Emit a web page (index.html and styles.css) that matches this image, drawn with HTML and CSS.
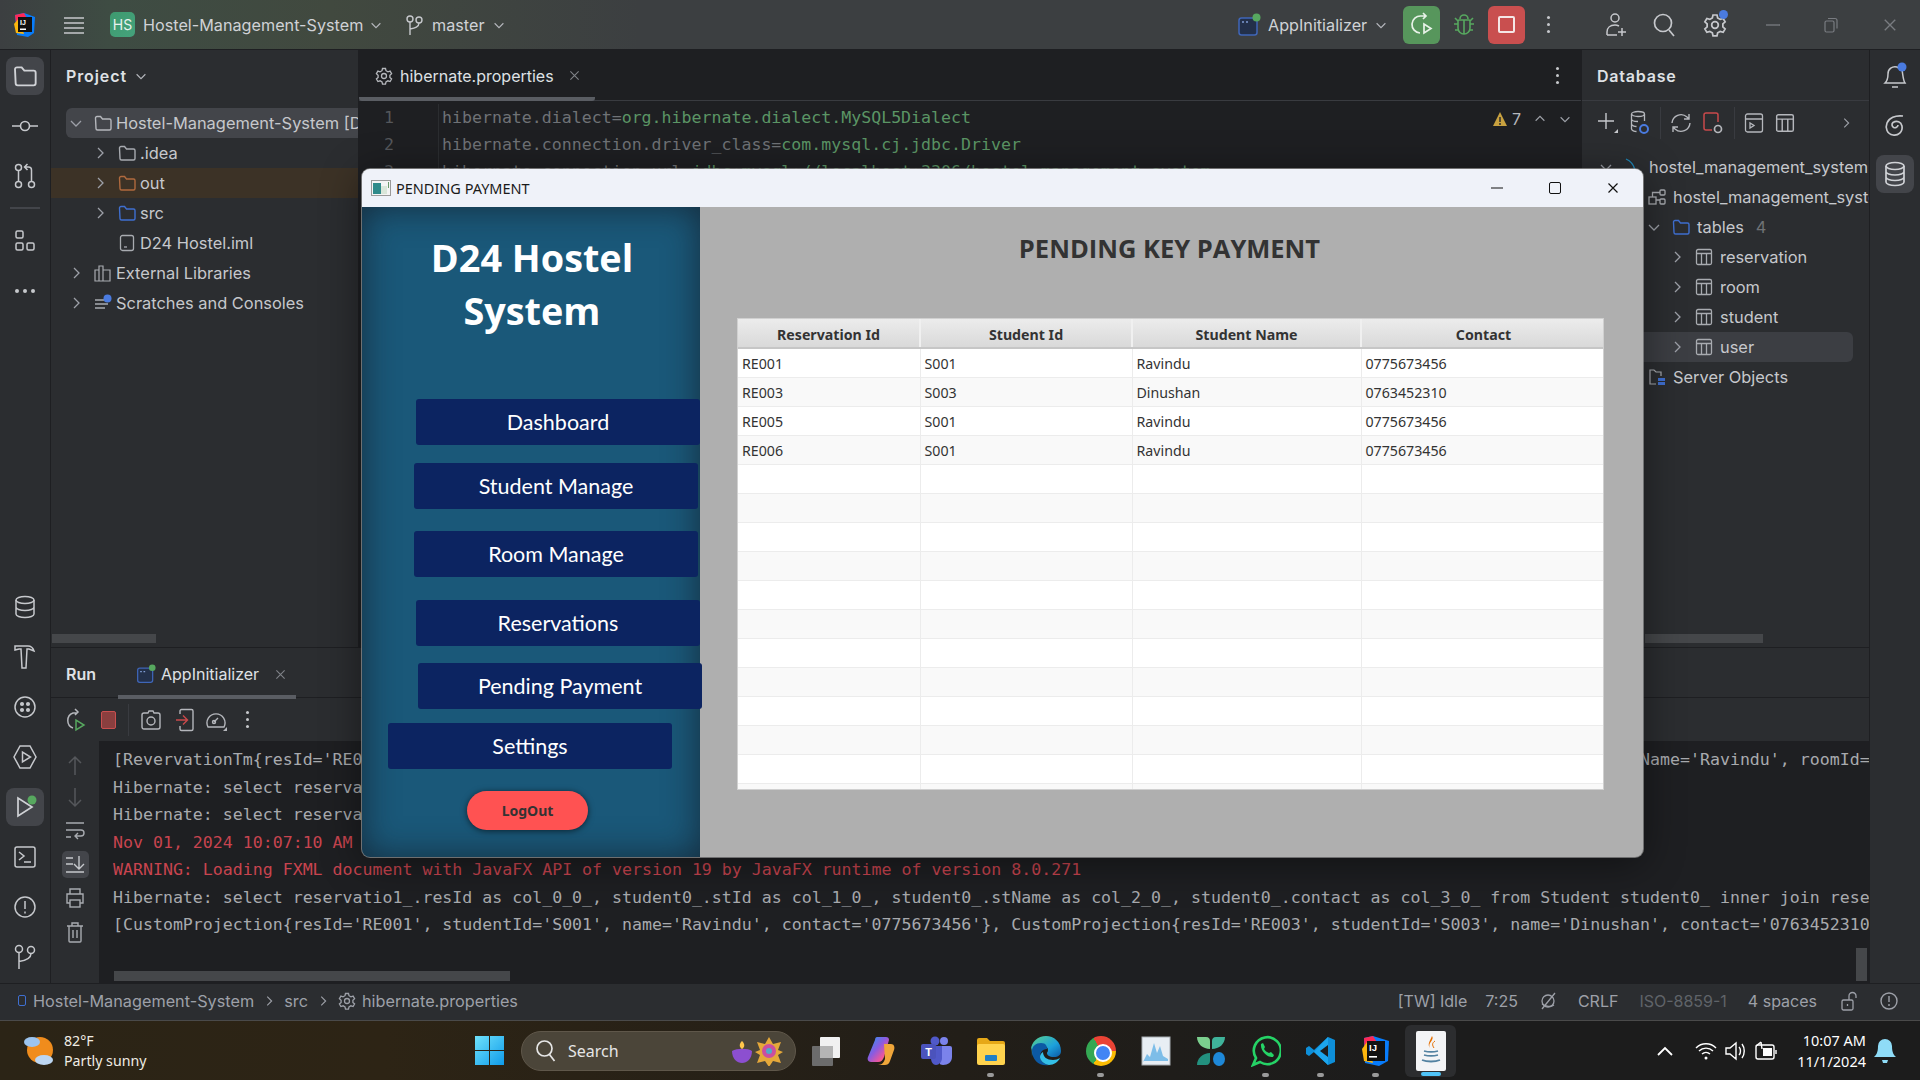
FILE: index.html
```html
<!DOCTYPE html>
<html lang="en">
  <head>
    <meta charset="UTF-8" />
    <meta name="viewport" content="width=device-width, initial-scale=1.0" />
    <title>Hostel-Management-System</title>
    <link rel="stylesheet" href="styles.css">
  </head>
  <body>
    <svg class="defs" width="0" height="0">
      <symbol id="chev-r" viewBox="0 0 16 16"><path d="M6 3l5 5-5 5" fill="none" stroke="currentColor" stroke-width="1.3"/></symbol>
      <symbol id="chev-d" viewBox="0 0 16 16"><path d="M3 6l5 5 5-5" fill="none" stroke="currentColor" stroke-width="1.3"/></symbol>
      <symbol id="folder" viewBox="0 0 18 18"><path d="M1.5 4a1.5 1.5 0 0 1 1.5-1.500h3.500l2 2.500h7a1.500 1.500 0 0 1 1.500 1.500v8a1.500 1.500 0 0 1-1.500 1.500h-12a1.500 1.500 0 0 1-1.500-1.500z" fill="none" stroke="currentColor" stroke-width="1.400"/></symbol>
      <symbol id="gear" viewBox="0 0 18 18"><path d="M7.500 1.500h3l.5 2.200 1.900 1.100 2.200-.7 1.500 2.600-1.700 1.500v2.200l1.700 1.500-1.500 2.600-2.200-.7-1.900 1.100-.5 2.200h-3l-.5-2.200-1.900-1.100-2.200.7-1.500-2.600 1.700-1.500v-2.200l-1.700-1.500 1.500-2.600 2.200.7 1.900-1.100z" fill="none" stroke="currentColor" stroke-width="1.300"/><circle cx="9" cy="9" r="2.500" fill="none" stroke="currentColor" stroke-width="1.300"/></symbol>
      <symbol id="tbl" viewBox="0 0 18 18"><rect x="1.500" y="1.500" width="15" height="15" rx="1.500" fill="none" stroke="currentColor" stroke-width="1.300"/><path d="M1.500 5.500h15M6.500 5.500v11M11.500 5.500v11" fill="none" stroke="currentColor" stroke-width="1.300"/></symbol>
      <symbol id="cross" viewBox="0 0 12 12"><path d="M1.500 1.500l9 9M10.500 1.500l-9 9" fill="none" stroke="currentColor" stroke-width="1.200"/></symbol>
      <symbol id="run-app" viewBox="0 0 24 24"><rect x="2" y="5" width="18" height="17" rx="2.500" fill="#23304a" stroke="#3f66b8" stroke-width="1.500"/><path d="M5 9h2M9 9h2" stroke="#7f9bd4" stroke-width="1.500"/><circle cx="19.500" cy="4.500" r="4" fill="#57a85f"/></symbol>
    </svg>

    <div class="ide">
      <header class="topbar">
        <svg class="logo" width="24" height="26" viewBox="0 0 24 26">
          <path d="M2 3l9-2 11 4-1 16-6 4-11-2z" fill="#087cfa"/>
          <path d="M2 3l9-2 4 7-11 12z" fill="#fe2857"/>
          <path d="M1 12l5-6 5 16-8-1z" fill="#fdb60d"/>
          <rect x="5" y="5" width="14" height="15" fill="#111"/>
          <text x="7" y="13" class="logo-text">IJ</text>
          <rect x="7" y="16.500" width="6" height="1.500" fill="#fff"/>
        </svg>
        <svg class="burger" width="20" height="20" viewBox="0 0 20 20"><path d="M0 3h20M0 8h20M0 13h20M0 18h20" stroke="#c6c8cc" stroke-width="1.600"/></svg>
        <span class="badge">HS</span>
        <span class="top-text project-name">Hostel-Management-System</span>
        <svg class="ic-14 top-chev" width="14" height="14"><use href="#chev-d"/></svg>
        <svg class="branch-ico" width="18" height="22" viewBox="0 0 18 22" fill="none" stroke="#c6c8cc" stroke-width="1.400"><circle cx="5" cy="5" r="3"/><circle cx="14" cy="6" r="3"/><path d="M5 8v13M14 9c0 4-4 5-9 6"/></svg>
        <span class="top-text branch-name">master</span>
        <svg class="ic-14 top-chev" width="14" height="14"><use href="#chev-d"/></svg>

        <div class="top-right">
          <svg class="run-conf" width="24" height="24"><use href="#run-app"/></svg>
          <span class="top-text conf-name">AppInitializer</span>
          <svg class="ic-14 top-chev" width="14" height="14"><use href="#chev-d"/></svg>
          <span class="act-btn act-green">
            <svg width="24" height="26" viewBox="0 0 24 26" fill="none" stroke="#e8f2e8" stroke-width="1.700"><path d="M10 21a8.500 8.500 0 0 1 1-17l5 0M13 1l3 3-3 3"/><path d="M14 12v9l7-4.500z"/></svg>
          </span>
          <svg class="bug" width="22" height="24" viewBox="0 0 22 24" fill="none" stroke="#57a85f" stroke-width="1.600"><path d="M7 6a4 4 0 0 1 8 0M6 7h10a1 1 0 0 1 1 1v7a6 6 0 0 1-12 0V8a1 1 0 0 1 1-1zM11 7v14M1 11h4M17 11h4M2 17h3M17 17h3M2 5l3 3M20 5l-3 3"/></svg>
          <span class="act-btn act-red"><i class="stop-sq"></i></span>
          <span class="v-dots"></span>
          <svg class="top-ico user-ico" width="24" height="26" viewBox="0 0 24 26" fill="none" stroke="#c6c8cc" stroke-width="1.500"><circle cx="10" cy="6" r="4"/><path d="M2 23v-3c0-4 3-7 8-7 2 0 3 .5 4 1M2 23h10M17 16v8M13 20h8"/></svg>
          <svg class="top-ico search-ico" width="24" height="26" viewBox="0 0 24 26" fill="none" stroke="#c6c8cc" stroke-width="1.700"><circle cx="11" cy="11" r="8.500"/><path d="M17 18l5 6"/></svg>
          <span class="settings-ico">
            <svg width="24" height="24"><use href="#gear"/></svg>
            <i class="blue-dot"></i>
          </span>
          <svg class="win-btn win-min" width="14" height="2" viewBox="0 0 14 2"><path d="M0 1h14" stroke="#797c81" stroke-width="1.300"/></svg>
          <svg class="win-btn win-max" width="14" height="16" viewBox="0 0 14 16" fill="none" stroke="#797c81" stroke-width="1.200"><rect x="1" y="4" width="9" height="11" rx="1.500"/><path d="M4 1.500h7a2 2 0 0 1 2 2v8"/></svg>
          <svg class="win-btn win-close" width="14" height="14" color="#797c81"><use href="#cross"/></svg>
        </div>
      </header>

      <div class="middle">
        <aside class="strip strip-left">
          <span class="strip-btn on"><svg width="26" height="24" color="#d0d2d6"><use href="#folder"/></svg></span>
          <span class="strip-btn"><svg width="26" height="16" viewBox="0 0 26 16" fill="none" stroke="#c6c8cc" stroke-width="1.600"><circle cx="13" cy="8" r="4.500"/><path d="M0 8h8.500M17.500 8H26"/></svg></span>
          <span class="strip-btn"><svg width="22" height="26" viewBox="0 0 22 26" fill="none" stroke="#c6c8cc" stroke-width="1.500"><circle cx="4.500" cy="4.500" r="3"/><circle cx="4.500" cy="21.500" r="3"/><circle cx="17.500" cy="21.500" r="3"/><path d="M4.500 7.500v11M17.500 18.500V7c0-2-1-3-3-3h-3M13.500 1l-3 3 3 3"/></svg></span>
          <i class="strip-sep"></i>
          <span class="strip-btn"><svg width="22" height="24" viewBox="0 0 22 24" fill="none" stroke="#c6c8cc" stroke-width="1.500"><rect x="2" y="2" width="7" height="7" rx="1.500"/><rect x="2" y="14" width="7" height="7" rx="1.500"/><rect x="13" y="14" width="7" height="7" rx="1.500"/></svg></span>
          <span class="strip-btn"><svg width="22" height="6" viewBox="0 0 22 6" fill="#c6c8cc"><circle cx="3" cy="3" r="2"/><circle cx="11" cy="3" r="2"/><circle cx="19" cy="3" r="2"/></svg></span>

          <span class="strip-btn push"><svg width="22" height="24" viewBox="0 0 22 24" fill="none" stroke="#c6c8cc" stroke-width="1.500"><ellipse cx="11" cy="5" rx="9" ry="3.500"/><path d="M2 5v14c0 2 4 3.500 9 3.500s9-1.500 9-3.500V5M2 12c0 2 4 3.500 9 3.500s9-1.500 9-3.500"/></svg></span>
          <span class="strip-btn"><svg width="22" height="26" viewBox="0 0 22 26" fill="none" stroke="#c6c8cc" stroke-width="1.500"><path d="M1 2h13c3 0 5 2 6 5l-5-2h-2l-1 19H8L7 5H5L1 6z"/></svg></span>
          <span class="strip-btn"><svg width="24" height="24" viewBox="0 0 24 24" fill="none" stroke="#c6c8cc" stroke-width="1.500"><circle cx="12" cy="12" r="10"/><circle cx="9" cy="9" r="1.300" fill="#c6c8cc"/><circle cx="15" cy="9" r="1.300" fill="#c6c8cc"/><circle cx="9" cy="15" r="1.300" fill="#c6c8cc"/><circle cx="15" cy="15" r="1.300" fill="#c6c8cc"/></svg></span>
          <span class="strip-btn"><svg width="24" height="26" viewBox="0 0 24 26" fill="none" stroke="#c6c8cc" stroke-width="1.500"><path d="M7 2h10l6 11-6 11H7L1 13z"/><path d="M9.500 8v10l8-5z"/></svg></span>
          <span class="strip-btn on"><svg width="26" height="26" viewBox="0 0 26 26" fill="none" stroke="#d0d2d6" stroke-width="1.700"><path d="M6 4v18l14-9z"/><circle cx="20" cy="6" r="4.500" fill="#57a85f" stroke="none"/></svg></span>
          <span class="strip-btn"><svg width="24" height="24" viewBox="0 0 24 24" fill="none" stroke="#c6c8cc" stroke-width="1.500"><rect x="2" y="2" width="20" height="20" rx="2"/><path d="M6 7l5 4-5 4M11 17h7"/></svg></span>
          <span class="strip-btn"><svg width="24" height="24" viewBox="0 0 24 24" fill="none" stroke="#c6c8cc" stroke-width="1.500"><circle cx="12" cy="12" r="10"/><path d="M12 6v8M12 16.500v2"/></svg></span>
          <span class="strip-btn"><svg width="22" height="26" viewBox="0 0 22 26" fill="none" stroke="#c6c8cc" stroke-width="1.500"><circle cx="5" cy="5" r="3.500"/><circle cx="17" cy="6" r="3.500"/><path d="M5 8.500V25M17 9.500c0 5-5 7-12 8"/></svg></span>
        </aside>

        <main class="work">
          <div class="work-top">
            <section class="project">
              <div class="panel-head">
                <span class="panel-title project-title">Project</span>
                <svg class="ic-14 head-chev" width="14" height="14"><use href="#chev-d"/></svg>
              </div>
              <ul class="tree">
                <li class="row lvl0 selected"><svg class="chev" width="16" height="16"><use href="#chev-d"/></svg>
                  <svg class="tree-ico" width="18" height="18" color="#b5b7bc"><use href="#folder"/></svg><span class="name">Hostel-Management-System [D24 Hostel]</span></li>
                <li class="row lvl1"><svg class="chev" width="16" height="16"><use href="#chev-r"/></svg>
                  <svg class="tree-ico" width="18" height="18" color="#a8abb0"><use href="#folder"/></svg><span class="name">.idea</span></li>
                <li class="row lvl1 out"><svg class="chev" width="16" height="16"><use href="#chev-r"/></svg>
                  <svg class="tree-ico" width="18" height="18" color="#b06a3e"><use href="#folder"/></svg><span class="name">out</span></li>
                <li class="row lvl1"><svg class="chev" width="16" height="16"><use href="#chev-r"/></svg>
                  <svg class="tree-ico" width="18" height="18" color="#3f6fd0"><use href="#folder"/></svg><span class="name">src</span></li>
                <li class="row lvl1"><span class="chev-gap"></span>
                  <svg class="tree-ico" width="18" height="18" viewBox="0 0 18 18" fill="none" stroke="#a8abb0" stroke-width="1.300"><rect x="2.500" y="1.500" width="13" height="15" rx="2"/><path d="M6 13h3"/></svg><span class="name">D24 Hostel.iml</span></li>
                <li class="row lvl0"><svg class="chev" width="16" height="16"><use href="#chev-r"/></svg>
                  <svg class="tree-ico" width="18" height="18" viewBox="0 0 18 18" fill="none" stroke="#a8abb0" stroke-width="1.200"><path d="M1 6h4v11H1zM5 2h4v15H5zM9 6h7v11H9z"/></svg><span class="name">External Libraries</span></li>
                <li class="row lvl0"><svg class="chev" width="16" height="16"><use href="#chev-r"/></svg>
                  <svg class="tree-ico" width="18" height="18" viewBox="0 0 18 18" fill="none" stroke="#a8abb0" stroke-width="1.300"><path d="M1 6h9M1 10h13M1 14h10"/><circle cx="13.500" cy="4.500" r="4" fill="#4a7be0" stroke="none"/></svg><span class="name">Scratches and Consoles</span></li>
              </ul>
              <i class="scroll-thumb thumb-project"></i>
            </section>

            <section class="editor">
              <div class="tabs">
                <div class="tab">
                  <svg class="tab-gear" width="18" height="18" color="#b5b7bc"><use href="#gear"/></svg>
                  <span>hibernate.properties</span>
                  <svg class="tab-close" width="11" height="11" color="#7f8287"><use href="#cross"/></svg>
                </div>
                <span class="v-dots tab-dots"></span>
              </div>
              <div class="code">
                <ol class="gutter">
                  <li>1</li>
                  <li>2</li>
                  <li>3</li>
                </ol>
                <pre class="source"><span class="k">hibernate.dialect=</span><span class="v">org.hibernate.dialect.MySQL5Dialect</span>
<span class="k">hibernate.connection.driver_class=</span><span class="v">com.mysql.cj.jdbc.Driver</span>
<span class="k">hibernate.connection.url=</span><span class="v">jdbc:mysql://localhost:3306/hostel_management_system</span></pre>
                <div class="inspect">
                  <svg width="16" height="16" viewBox="0 0 16 16"><path d="M8 1l7 14H1z" fill="#c8a13f"/><path d="M8 6v5M8 12v2" stroke="#2a2b2e" stroke-width="1.500"/></svg>
                  <span class="inspect-num">7</span>
                  <svg class="ic-14" width="14" height="14"><g transform="rotate(180 7 7)"><use href="#chev-d"/></g></svg>
                  <svg class="ic-14" width="14" height="14"><use href="#chev-d"/></svg>
                </div>
              </div>
            </section>

            <section class="database">
              <div class="panel-head">
                <span class="panel-title db-title">Database</span>
              </div>
              <div class="db-tools">
                <svg class="t-add" width="22" height="22" viewBox="0 0 22 22" fill="none" stroke="#c6c8cc" stroke-width="1.400"><path d="M9 1v16M1 9h16"/><path d="M21 17v4h-4z" fill="#c6c8cc" stroke="none"/></svg>
                <svg class="t-db" width="20" height="26" viewBox="0 0 20 26" fill="none" stroke="#b5b7bc" stroke-width="1.300"><ellipse cx="8" cy="4" rx="6.500" ry="2.500"/><path d="M1.500 4v15c0 1.500 3 2.500 5 2.500M14.500 4v7M1.500 9c0 1.500 3 2.500 6.500 2.500M1.500 14c0 1.500 3 2.500 5 2.500"/><circle cx="14" cy="19" r="4" stroke="#4a7be0" stroke-width="2"/></svg>
                <i class="t-sep"></i>
                <svg class="t-sync" width="22" height="22" viewBox="0 0 22 22" fill="none" stroke="#b5b7bc" stroke-width="1.400"><path d="M2 11a9 9 0 0 1 15-6l2 2M19 2v5h-5M20 11a9 9 0 0 1-15 6l-2-2M3 20v-5h5"/></svg>
                <svg class="t-stop" width="22" height="24" viewBox="0 0 22 24" fill="none"><path d="M10 19H4a2 2 0 0 1-2-2V4a2 2 0 0 1 2-2h10a2 2 0 0 1 2 2v7" stroke="#c9494b" stroke-width="1.500"/><circle cx="16" cy="18" r="3.500" stroke="#b5b7bc" stroke-width="1.700"/></svg>
                <i class="t-sep"></i>
                <svg class="t-con" width="20" height="22" viewBox="0 0 20 22" fill="none" stroke="#b5b7bc" stroke-width="1.300"><rect x="1.500" y="2" width="17" height="18" rx="2"/><path d="M1.500 7h17M6 11v5l4-2.500z"/></svg>
                <svg class="t-tbl" width="20" height="22" color="#b5b7bc"><use href="#tbl"/></svg>
                <svg class="t-more" width="14" height="14" color="#9da0a8"><use href="#chev-r"/></svg>
              </div>
              <ul class="tree db-tree">
                <li class="row d0"><svg class="chev" width="16" height="16"><use href="#chev-d"/></svg>
                  <svg class="tree-ico" width="18" height="18" viewBox="0 0 18 18" fill="none" stroke="#1f87b8" stroke-width="1.300"><path d="M2 1c5 2 8 7 9 11l4 4M11 12l-1 4"/></svg><span class="name">hostel_management_system</span></li>
                <li class="row d1"><span class="chev-gap"></span>
                  <svg class="tree-ico" width="18" height="18" viewBox="0 0 18 18" fill="none" stroke="#a8abb0" stroke-width="1.300"><rect x="1" y="9" width="7" height="7"/><rect x="12" y="2" width="5" height="5" rx="1"/><rect x="12" y="11" width="5" height="5" rx="1"/><path d="M8 12h4M4.500 9V4.500H12"/></svg><span class="name">hostel_management_system</span></li>
                <li class="row d2"><svg class="chev" width="16" height="16"><use href="#chev-d"/></svg>
                  <svg class="tree-ico" width="18" height="18" color="#3f6fd0"><use href="#folder"/></svg><span class="name">tables</span><span class="count">4</span></li>
                <li class="row d3"><svg class="chev" width="16" height="16"><use href="#chev-r"/></svg>
                  <svg class="tree-ico" width="18" height="18" color="#a8abb0"><use href="#tbl"/></svg><span class="name">reservation</span></li>
                <li class="row d3"><svg class="chev" width="16" height="16"><use href="#chev-r"/></svg>
                  <svg class="tree-ico" width="18" height="18" color="#a8abb0"><use href="#tbl"/></svg><span class="name">room</span></li>
                <li class="row d3"><svg class="chev" width="16" height="16"><use href="#chev-r"/></svg>
                  <svg class="tree-ico" width="18" height="18" color="#a8abb0"><use href="#tbl"/></svg><span class="name">student</span></li>
                <li class="row d3 picked"><svg class="chev" width="16" height="16"><use href="#chev-r"/></svg>
                  <svg class="tree-ico" width="18" height="18" color="#a8abb0"><use href="#tbl"/></svg><span class="name">user</span></li>
                <li class="row d1"><span class="chev-gap"></span>
                  <svg class="tree-ico" width="18" height="18" viewBox="0 0 18 18" fill="none" stroke="#a8abb0" stroke-width="1.200"><path d="M8 16H2V2h4l2 2h5v4"/><rect x="10" y="10" width="7" height="3" fill="#3f6fd0" stroke="none"/><rect x="10" y="14" width="7" height="3" fill="#3f6fd0" stroke="none"/></svg><span class="name">Server Objects</span></li>
              </ul>
              <i class="scroll-thumb thumb-db"></i>
            </section>
          </div>

          <section class="run">
            <div class="run-head">
              <span class="panel-title run-title">Run</span>
              <div class="run-tab">
                <svg width="20" height="20"><use href="#run-app"/></svg>
                <span>AppInitializer</span>
                <svg class="tab-close" width="11" height="11" color="#7f8287"><use href="#cross"/></svg>
              </div>
            </div>
            <div class="run-tools">
              <svg class="rt-rerun" width="22" height="24" viewBox="0 0 22 24" fill="none" stroke="#b5b7bc" stroke-width="1.500"><path d="M9 20a8 8 0 0 1 0-15l4 0M11 1l3 3-3 3"/><path d="M12 12v10l8-5z" stroke="#57a85f"/></svg>
              <i class="rt-stop"></i>
              <i class="t-sep rt-sep"></i>
              <svg class="rt-cam" width="20" height="22" viewBox="0 0 20 22" fill="none" stroke="#b5b7bc" stroke-width="1.400"><path d="M7 4l1-2h4l1 2h4a2 2 0 0 1 2 2v12a2 2 0 0 1-2 2H3a2 2 0 0 1-2-2V6a2 2 0 0 1 2-2z"/><circle cx="10" cy="12" r="4"/></svg>
              <svg class="rt-exit" width="18" height="24" viewBox="0 0 18 24" fill="none" stroke="#b5b7bc" stroke-width="1.400"><path d="M4 6V3a1.500 1.500 0 0 1 1.500-1.500h10A1.500 1.500 0 0 1 17 3v18a1.500 1.500 0 0 1-1.500 1.500h-10A1.500 1.500 0 0 1 4 21v-3"/><path d="M0 12h11M7 7.500l4.500 4.500L7 16.500" stroke="#c9494b"/></svg>
              <svg class="rt-gauge" width="22" height="22" viewBox="0 0 22 22" fill="none" stroke="#b5b7bc" stroke-width="1.400"><path d="M3 18a9 9 0 1 1 16 0zM9 13l4-4"/><circle cx="9" cy="13" r="1.500"/><path d="M22 18v4h-4z" fill="#b5b7bc" stroke="none"/></svg>
              <span class="v-dots rt-dots"></span>
            </div>
            <div class="run-body">
              <div class="run-side">
                <svg class="rs" width="14" height="20" viewBox="0 0 14 20" fill="none" stroke="#55575b" stroke-width="1.500"><path d="M7 20V2M1 8l6-6 6 6"/></svg>
                <svg class="rs" width="14" height="20" viewBox="0 0 14 20" fill="none" stroke="#55575b" stroke-width="1.500"><path d="M7 0v18M1 12l6 6 6-6"/></svg>
                <svg class="rs" width="20" height="20" viewBox="0 0 20 20" fill="none" stroke="#a8abb0" stroke-width="1.400"><path d="M1 2h18M1 9h15a3 3 0 0 1 0 6h-6M13 12l-3 3 3 3M1 16h5"/></svg>
                <span class="rs-on"><svg width="20" height="20" viewBox="0 0 20 20" fill="none" stroke="#c6c8cc" stroke-width="1.400"><path d="M1 3h7M1 9h7M1 17h18M14 1v13M9 9l5 5 5-5"/></svg></span>
                <svg class="rs" width="20" height="20" viewBox="0 0 20 20" fill="none" stroke="#a8abb0" stroke-width="1.400"><path d="M5 6V1h10v5M5 15H2V6h16v9h-3"/><rect x="5" y="12" width="10" height="7"/></svg>
                <svg class="rs" width="18" height="22" viewBox="0 0 18 22" fill="none" stroke="#a8abb0" stroke-width="1.400"><path d="M1 5h16M6 5V2h6v3M3 5v15a1 1 0 0 0 1 1h10a1 1 0 0 0 1-1V5M7 9v8M11 9v8"/></svg>
              </div>
              <pre class="console"><span class="log">[RevervationTm{resId='RE001', date=2024-10-28, studentId='S001', roomTypeId='RM-1324', status='Pending', keyMoney=5000.0, paidAmount=0.0, qty=01, studentName='Ravindu', roomId='RM-1324'}]</span>
<span class="log">Hibernate: select reservatio0_.resId as resId1_1_, reservatio0_.date as date2_1_ from Reservation reservatio0_</span>
<span class="log">Hibernate: select reservatio0_.resId as resId1_1_, reservatio0_.date as date2_1_ from Reservation reservatio0_</span>
<span class="err">Nov 01, 2024 10:07:10 AM javafx.fxml.FXMLLoader$ValueElement processValue</span>
<span class="err">WARNING: Loading FXML document with JavaFX API of version 19 by JavaFX runtime of version 8.0.271</span>
<span class="log">Hibernate: select reservatio1_.resId as col_0_0_, student0_.stId as col_1_0_, student0_.stName as col_2_0_, student0_.contact as col_3_0_ from Student student0_ inner join reservation</span>
<span class="log">[CustomProjection{resId='RE001', studentId='S001', name='Ravindu', contact='0775673456'}, CustomProjection{resId='RE003', studentId='S003', name='Dinushan', contact='0763452310'}]</span></pre>
              <i class="console-h"></i>
              <i class="console-v"></i>
            </div>
          </section>
        </main>

        <aside class="strip strip-right">
          <span class="strip-btn bell-btn">
            <svg width="24" height="28" viewBox="0 0 24 28" fill="none" stroke="#c6c8cc" stroke-width="1.500"><path d="M2 21c2-2 3-4 3-9a7 7 0 0 1 9-7l5 3c1 5 1 10 3 13zM9 25h6"/><circle cx="19" cy="5" r="4.500" fill="#4a7be0" stroke="none"/></svg>
          </span>
          <span class="strip-btn"><svg width="24" height="26" viewBox="0 0 24 26" fill="none" stroke="#c6c8cc" stroke-width="1.700"><path d="M15 13a3 3 0 1 1-5-2.500c4-2.500 8-.5 9 3.500 1 6-4 10-9 9-6-1-8-7-6-12 2-5 8-8 16-7"/></svg></span>
          <span class="strip-btn on"><svg width="22" height="26" viewBox="0 0 22 26" fill="none" stroke="#d0d2d6" stroke-width="1.700"><ellipse cx="11" cy="5" rx="9" ry="3.500"/><path d="M2 5v16c0 2 4 3.500 9 3.500s9-1.500 9-3.500V5M2 10.500c0 2 4 3.500 9 3.500s9-1.500 9-3.500M2 16c0 2 4 3.500 9 3.500s9-1.500 9-3.500"/></svg></span>
        </aside>
      </div>

      <footer class="status">
        <i class="st-mod"></i>
        <span>Hostel-Management-System</span>
        <svg class="st-chev" width="14" height="14"><use href="#chev-r"/></svg>
        <span>src</span>
        <svg class="st-chev" width="14" height="14"><use href="#chev-r"/></svg>
        <svg class="st-gear" width="18" height="18"><use href="#gear"/></svg>
        <span>hibernate.properties</span>
        <div class="st-right">
          <span class="st-idle">[TW] Idle</span>
          <span>7:25</span>
          <svg width="18" height="20" viewBox="0 0 18 20" fill="none" stroke="#9da0a8" stroke-width="1.300"><circle cx="9" cy="10" r="6"/><path d="M3 13c4 3 9 3 12 1M3 18L16 2"/></svg>
          <span>CRLF</span>
          <span class="dim">ISO-8859-1</span>
          <span>4 spaces</span>
          <svg class="st-lock" width="18" height="20" viewBox="0 0 18 20" fill="none" stroke="#9da0a8" stroke-width="1.300"><rect x="1" y="9" width="11" height="10" rx="1.500"/><path d="M8 9V5a3.500 3.500 0 0 1 7 0v2M6.500 13v2"/></svg>
          <svg class="st-warn" width="18" height="18" viewBox="0 0 18 18" fill="none" stroke="#9da0a8" stroke-width="1.400"><circle cx="9" cy="9" r="8"/><path d="M9 4v6M9 12v2"/></svg>
        </div>
      </footer>

      <footer class="taskbar">
        <div class="weather">
          <svg width="34" height="32" viewBox="0 0 34 32">
            <circle cx="17" cy="15" r="13" fill="#f08c1c"/>
            <ellipse cx="9" cy="7" rx="8" ry="5" fill="#9cc4ee"/>
            <ellipse cx="21" cy="25" rx="9" ry="5" fill="#bcd6f2"/>
          </svg>
          <div class="weather-text">
            <span>82°F</span>
            <span>Partly sunny</span>
          </div>
        </div>
        <svg class="start" width="29" height="29" viewBox="0 0 29 29">
          <defs><linearGradient id="win" x1="0" y1="0" x2="1" y2="1"><stop offset="0" stop-color="#6fe2fb"/><stop offset="1" stop-color="#0f9bea"/></linearGradient></defs>
          <path d="M0 0h14v14H0zM15 0h14v14H15zM0 15h14v14H0zM15 15h14v14H15z" fill="url(#win)"/>
        </svg>
        <div class="search">
          <svg width="22" height="24" viewBox="0 0 22 24" fill="none" stroke="#e6e6e6" stroke-width="1.700"><circle cx="9.500" cy="9.500" r="7.500"/><path d="M14.500 15.500l5 6.500"/></svg>
          <span>Search</span>
          <svg class="search-deco" width="54" height="30" viewBox="0 0 54 30">
            <path d="M2 15c5-3 16-3 20 0 0 8-5 12-10 12S2 23 2 15z" fill="#8c4fd0"/>
            <path d="M12 5c3 3 3 6 0 8-3-2-3-5 0-8z" fill="#ffc64a"/>
            <path d="M39 1l4 7 8-2-3 8 5 2-5 3 3 8-8-2-4 6-4-6-8 2 3-8-5-3 5-2-3-8 8 2z" fill="#e5a83a"/>
            <circle cx="39" cy="15" r="7" fill="#c94fa0"/>
            <circle cx="39" cy="15" r="3" fill="#4fa8c9"/>
          </svg>
        </div>
        <div class="apps">
          <span class="app">
            <svg width="30" height="30" viewBox="0 0 30 30"><rect x="1" y="10" width="21" height="20" rx="1" fill="#6c6c6c"/><rect x="9" y="1" width="20" height="21" rx="1" fill="#f1f1f1"/><rect x="9" y="10" width="13" height="12" fill="#b4b4b4"/></svg>
          </span>
          <span class="app">
            <svg width="30" height="32" viewBox="0 0 30 32">
              <defs><linearGradient id="cop" x1="0" y1="0" x2="1" y2="1"><stop offset="0" stop-color="#1f9cf0"/><stop offset=".45" stop-color="#8a5be0"/><stop offset=".75" stop-color="#f0569a"/><stop offset="1" stop-color="#f8a42a"/></linearGradient></defs>
              <path d="M11 2h9c2 0 3 1 3 3l-5 17c-1 3-3 5-6 5H5c-3 0-4-3-3-5l7-17c0-2 1-3 2-3z" fill="url(#cop)"/>
              <path d="M18 9h7c3 0 4 3 3 6l-4 11c-1 3-3 4-5 4H12c4 0 6-3 7-6z" fill="#f0a63a"/>
            </svg>
          </span>
          <span class="app">
            <svg width="32" height="30" viewBox="0 0 32 30">
              <circle cx="24" cy="5" r="4" fill="#7b83eb"/><circle cx="15" cy="5" r="4.500" fill="#5059c9"/>
              <path d="M20 10h10a2 2 0 0 1 2 2v9c0 5-4 8-9 8-2 0-3-1-3-1z" fill="#7b83eb"/>
              <path d="M11 10h11v12c0 4-3 7-6 7-3 0-5-3-5-7z" fill="#5059c9"/>
              <rect x="1" y="8" width="15" height="15" rx="2" fill="#4b53bc"/>
              <text x="8.500" y="20" class="teams-t">T</text>
            </svg>
          </span>
          <span class="app dot">
            <svg width="30" height="30" viewBox="0 0 30 30"><path d="M1 4a2 2 0 0 1 2-2h8l3 3h13a2 2 0 0 1 2 2v3H1z" fill="#e6a817"/><rect x="1" y="8" width="28" height="21" rx="2" fill="#ffd34e"/><rect x="9" y="19" width="12" height="6" rx="1" fill="#1f7fc7"/></svg>
          </span>
          <span class="app">
            <svg width="30" height="30" viewBox="0 0 30 30">
              <defs><linearGradient id="edge" x1="0" y1="0" x2="1" y2="1"><stop offset="0" stop-color="#5ad18c"/><stop offset=".6" stop-color="#1ca0dc"/><stop offset="1" stop-color="#0c59a4"/></linearGradient></defs>
              <path d="M15 0c8 0 15 6 15 15 0 4-3 6-7 6-5 0-7-2-7-4 0-1 1-1 1-3 0-3-3-5-7-4-5 1-9 6-9 11C1 13 0 10 0 14 0 6 7 0 15 0z" fill="url(#edge)"/>
              <path d="M1 15c0-5 4-8 9-8s6 3 6 6c-5 0-7 4-7 8 0 3 3 7 9 8-9 2-17-5-17-14z" fill="#0c59a4"/>
              <path d="M18 29c-6-1-9-5-9-8 0-2 1-4 3-5 0 5 4 8 10 8 3 0 5-1 7-2-2 4-6 7-11 7z" fill="#34c0e8"/>
            </svg>
          </span>
          <span class="app dot"><i class="chrome"></i></span>
          <span class="app">
            <svg width="30" height="30" viewBox="0 0 30 30"><rect x="1" y="1" width="28" height="28" fill="#e8eef4" stroke="#a8adb2"/><path d="M2 26l4-8 3 3 4-14 3 10 3-7 3 10 5 3v2H2z" fill="#7dbde8"/></svg>
          </span>
          <span class="app">
            <svg width="30" height="30" viewBox="0 0 30 30"><path d="M1 1h9c3 0 4 2 4 4v8c-7 0-13-5-13-12z" fill="#7bcf8e"/><path d="M29 1h-9c-3 0-4 2-4 4v8c7 0 13-5 13-12z" fill="#3fb39a"/><path d="M1 29h9c3 0 4-2 4-4v-8C7 17 1 22 1 29z" fill="#23917f"/><ellipse cx="23" cy="23" rx="6" ry="7" fill="#1e88d8"/></svg>
          </span>
          <span class="app dot">
            <svg width="30" height="32" viewBox="0 0 30 32" fill="none"><path d="M2 30l3-7A13.500 13.500 0 1 1 9 27z" stroke="#25d366" stroke-width="2.600"/><path d="M10 9l2-1 2 4-1 2c1 2 3 3 5 4l2-1 3 3-1 2c-5 1-13-6-12-13z" fill="#25d366"/></svg>
          </span>
          <span class="app dot">
            <svg width="30" height="30" viewBox="0 0 30 30"><path d="M22 1l7 3v22l-7 3L8 16 3 20l-3-2v-6l3-2 5 4z" fill="#0e8fd9"/><path d="M22 1v28L8 16z" fill="#1ca6ee"/><path d="M22 9l-8 6 8 6z" fill="#1c1c1c"/></svg>
          </span>
          <span class="app dot">
            <svg width="30" height="32" viewBox="0 0 30 32"><path d="M3 3l9-2 16 5-1 20-9 5-14-3z" fill="#087cfa"/><path d="M3 3l9-2 5 8L4 24z" fill="#fe2857"/><path d="M1 14l5-7 6 21-9-2z" fill="#fdb60d"/><rect x="6" y="6" width="18" height="20" fill="#111"/><text x="8" y="16" class="ij-t">IJ</text><rect x="8" y="21" width="8" height="1.600" fill="#fff"/></svg>
          </span>
          <span class="app current">
            <svg width="30" height="40" viewBox="0 0 30 40"><rect x="0" y="0" width="30" height="40" rx="2" fill="#f3f4f6"/><path d="M16 5c3 4-5 7-2 12-3-4 0-7 2-12z" fill="#e76f00"/><path d="M19 10c-3 2-3 4-1 7" stroke="#e76f00" fill="none"/><path d="M8 20c4 1 10 1 14 0M8 24c4 1 10 1 14 0M6 29c5 2 13 2 18 0" stroke="#5382a1" stroke-width="1.800" fill="none"/></svg>
          </span>
        </div>
        <div class="tray">
          <svg class="tray-chev" width="18" height="12" viewBox="0 0 18 12" fill="none" stroke="#fff" stroke-width="1.800"><path d="M2 10l7-7 7 7"/></svg>
          <svg width="24" height="22" viewBox="0 0 24 22" fill="none" stroke="#fff" stroke-width="1.400"><path d="M2 8a14 14 0 0 1 20 0M5 11a10 10 0 0 1 14 0M8 14a6 6 0 0 1 8 0"/><circle cx="12" cy="18" r="1.500" fill="#fff" stroke="none"/></svg>
          <svg width="24" height="22" viewBox="0 0 24 22" fill="none" stroke="#fff" stroke-width="1.400"><path d="M2 8h4l6-5v16l-6-5H2zM15 7c2 2 2 6 0 8M18 4c3 4 3 10 0 14"/></svg>
          <svg width="24" height="22" viewBox="0 0 24 22" fill="none" stroke="#fff" stroke-width="1.400"><rect x="2" y="5" width="18" height="14" rx="2"/><path d="M22 10v4M2 6l5-4M7 2l1 7" /><rect x="9" y="8" width="9" height="8" fill="#fff" stroke="none"/></svg>
          <div class="clock">
            <span>10:07 AM</span>
            <span>11/1/2024</span>
          </div>
          <svg class="tray-bell" width="24" height="28" viewBox="0 0 24 28"><path d="M12 2a7 7 0 0 1 7 7c0 7 2 9 4 11H1c2-2 4-4 4-11a7 7 0 0 1 7-7z" fill="#8fdcf7"/><path d="M9 23h6l-1 3h-4z" fill="#8fdcf7"/></svg>
        </div>
      </footer>

      <div class="dialog">
        <div class="dialog-title">
          <svg width="20" height="16" viewBox="0 0 20 16"><rect x=".5" y=".5" width="19" height="15" fill="#f4f4f4" stroke="#9a9a9a"/><rect x="2" y="3" width="8" height="11" fill="#2f8a8a"/><rect x="10" y="6" width="6" height="8" fill="#d9e6d9"/><rect x="17" y="2" width="1" height="6" fill="#6a9a6a"/></svg>
          <span>PENDING PAYMENT</span>
          <div class="dialog-ctrls">
            <svg width="12" height="12" viewBox="0 0 12 12"><path d="M0 6h12" stroke="#111" stroke-width="1.200"/></svg>
            <svg width="12" height="12" viewBox="0 0 12 12"><rect x=".5" y=".5" width="11" height="11" rx="1.500" fill="none" stroke="#111"/></svg>
            <svg width="12" height="12" color="#111"><use href="#cross"/></svg>
          </div>
        </div>
        <div class="dialog-body">
          <nav class="sidebar">
            <h1 class="brand">D24 Hostel<br>System</h1>
            <button class="nav-btn nb-dash">Dashboard</button>
            <button class="nav-btn nb-student">Student Manage</button>
            <button class="nav-btn nb-room">Room Manage</button>
            <button class="nav-btn nb-res">Reservations</button>
            <button class="nav-btn nb-pend">Pending Payment</button>
            <button class="nav-btn nb-set">Settings</button>
            <button class="logout">LogOut</button>
          </nav>
          <div class="pending">
            <h2>PENDING KEY PAYMENT</h2>
            <div class="table-wrap">
              <table>
                <colgroup><col class="c1"><col class="c2"><col class="c3"><col class="c4"></colgroup>
                <thead>
                  <tr><th>Reservation Id</th><th>Student Id</th><th>Student Name</th><th>Contact</th></tr>
                </thead>
                <tbody>
                  <tr><td>RE001</td><td>S001</td><td>Ravindu</td><td>0775673456</td></tr>
                  <tr><td>RE003</td><td>S003</td><td>Dinushan</td><td>0763452310</td></tr>
                  <tr><td>RE005</td><td>S001</td><td>Ravindu</td><td>0775673456</td></tr>
                  <tr><td>RE006</td><td>S001</td><td>Ravindu</td><td>0775673456</td></tr>
                  <tr><td></td><td></td><td></td><td></td></tr>
                  <tr><td></td><td></td><td></td><td></td></tr>
                  <tr><td></td><td></td><td></td><td></td></tr>
                  <tr><td></td><td></td><td></td><td></td></tr>
                  <tr><td></td><td></td><td></td><td></td></tr>
                  <tr><td></td><td></td><td></td><td></td></tr>
                  <tr><td></td><td></td><td></td><td></td></tr>
                  <tr><td></td><td></td><td></td><td></td></tr>
                  <tr><td></td><td></td><td></td><td></td></tr>
                  <tr><td></td><td></td><td></td><td></td></tr>
                  <tr><td></td><td></td><td></td><td></td></tr>
                  <tr><td></td><td></td><td></td><td></td></tr>
                </tbody>
              </table>
            </div>
          </div>
        </div>
      </div>
    </div>
  </body>
</html>
```

FILE: styles.css
```css
* {
  margin: 0;
  padding: 0;
  box-sizing: border-box;
  list-style: none;
}
html, body {
  width: 1920px;
  height: 1080px;
  overflow: hidden;
}
body {
  font-family: Inter, "Noto Sans", sans-serif;
  font-size: 16px;
  color: #c6c8cc;
  background: #1e1f22;
}
svg {
  display: block;
  flex: none;
}
i {
  display: block;
}
.defs {
  position: absolute;
}
.ide {
  position: relative;
  width: 1920px;
  height: 1080px;
  display: flex;
  flex-direction: column;
}

/* top bar */
.topbar {
  height: 50px;
  flex: none;
  display: flex;
  align-items: center;
  padding-left: 13px;
  background: linear-gradient(90deg, #3c3f41 0, #3e4c43 110px, #41493f 330px, #3c3f41 640px);
  border-bottom: 1px solid #1e1f22;
}
.logo-text {
  font: bold 7px "Liberation Sans", sans-serif;
  fill: #fff;
}
.burger {
  margin-left: 27px;
}
.badge {
  width: 25px;
  height: 25px;
  margin-left: 26px;
  border-radius: 5px;
  background: linear-gradient(135deg, #3e9a6f, #45a27c);
  color: #e8f2ee;
  font-size: 14px;
  line-height: 25px;
  text-align: center;
}
.top-text {
  white-space: nowrap;
  color: #d0d2d6;
  font-size: 16.200px;
}
.project-name {
  margin-left: 8px;
  width: 219px;
}
.top-chev {
  margin-left: 7px;
  color: #b5b7bc;
}
.branch-ico {
  margin-left: 22px;
}
.branch-name {
  margin-left: 9px;
  width: 53px;
}
.top-right {
  margin-left: auto;
  display: flex;
  align-items: center;
  padding-right: 23px;
}
.conf-name {
  margin-left: 7px;
  width: 99px;
}
.act-btn {
  width: 37px;
  height: 38px;
  border-radius: 6px;
  display: flex;
  align-items: center;
  justify-content: center;
}
.act-green {
  margin-left: 15px;
  background: #57965c;
}
.act-red {
  margin-left: 13px;
  background: #c94f4f;
}
.bug {
  margin-left: 13px;
}
.stop-sq {
  width: 17px;
  height: 17px;
  border: 2px solid #f5e6e6;
  border-radius: 2px;
}
.v-dots {
  width: 3px;
  height: 3px;
  margin: 0 9px 0 22px;
  border-radius: 50%;
  background: #c6c8cc;
  box-shadow: 0 -7px 0 #c6c8cc, 0 7px 0 #c6c8cc;
}
.user-ico {
  margin-left: 46px;
}
.search-ico {
  margin-left: 23px;
}
.settings-ico {
  position: relative;
  margin-left: 27px;
  color: #c6c8cc;
}
.blue-dot {
  position: absolute;
  top: -3px;
  right: -1px;
  width: 9px;
  height: 9px;
  border-radius: 50%;
  background: #4a7be0;
}
.win-min {
  margin-left: 39px;
}
.win-max {
  margin-left: 44px;
}
.win-close {
  margin-left: 45px;
}

/* middle */
.middle {
  flex: none;
  height: 933px;
  display: flex;
}
.strip {
  width: 51px;
  flex: none;
  display: flex;
  flex-direction: column;
  align-items: center;
  padding: 7px 0;
  background: #2b2d30;
}
.strip-left {
  border-right: 1px solid #1e1f22;
}
.strip-right {
  border-left: 1px solid #1e1f22;
}
.strip-btn {
  width: 38px;
  height: 38px;
  margin-bottom: 12px;
  border-radius: 8px;
  display: flex;
  align-items: center;
  justify-content: center;
}
.strip-btn:last-child {
  margin-bottom: 0;
}
.strip-right .strip-btn {
  margin-bottom: 11px;
}
.strip-btn.on {
  background: #43454a;
}
.strip-btn.push {
  margin-top: auto;
}
.strip-sep {
  width: 30px;
  height: 2px;
  margin-bottom: 13px;
  background: #43454a;
}
.work {
  flex: 1;
  min-width: 0;
  display: flex;
  flex-direction: column;
}
.work-top {
  flex: none;
  height: 598px;
  display: flex;
  border-bottom: 1px solid #1e1f22;
}

/* project + database panels */
.project {
  position: relative;
  width: 308px;
  flex: none;
  overflow: hidden;
  background: #2b2d30;
  border-right: 1px solid #1e1f22;
}
.panel-head {
  height: 51px;
  display: flex;
  align-items: center;
  padding: 2px 0 0 15px;
  border-bottom: 1px solid transparent;
}
.panel-title {
  color: #dfe1e5;
  font-size: 16px;
  font-weight: 600;
}
.project-title {
  letter-spacing: .9px;
}
.head-chev {
  margin-left: 7px;
  color: #b5b7bc;
}
.tree {
  padding-top: 7px;
  white-space: nowrap;
}
.row {
  height: 30px;
  display: flex;
  align-items: center;
  color: #c6c8cc;
  font-size: 16.400px;
}
.chev,
.chev-gap {
  width: 16px;
  flex: none;
  color: #9da0a8;
}
.tree-ico {
  margin: 0 4px 0 10px;
}
.name {
  white-space: nowrap;
}
.lvl0 {
  padding-left: 17px;
}
.lvl1 {
  padding-left: 41px;
}
.row.selected {
  margin-left: 15px;
  padding-left: 2px;
  border-radius: 6px 0 0 6px;
  background: #43454a;
}
.row.out {
  background: #3c3226;
}
.scroll-thumb {
  position: absolute;
  height: 9px;
  background: #45474a;
}
.thumb-project {
  left: 1px;
  top: 584px;
  width: 104px;
}
.thumb-db {
  left: 63px;
  top: 584px;
  width: 118px;
}

/* editor */
.editor {
  flex: 1;
  min-width: 0;
  background: #1e1f22;
  overflow: hidden;
}
.tabs {
  height: 51px;
  display: flex;
  align-items: center;
  justify-content: space-between;
  border-bottom: 1px solid #393b40;
}
.tab {
  width: 236px;
  height: 51px;
  display: flex;
  align-items: center;
  padding: 5px 0 0 16px;
  color: #dfe1e5;
  border-bottom: 4px solid #5a5d63;
  border-radius: 0 0 3px 3px;
}
.tab-gear {
  margin-right: 7px;
}
.tab-close {
  margin-left: 15px;
}
.tab-dots {
  margin: 0 22px 0 0;
}
.code {
  display: flex;
  position: relative;
  padding-top: 3px;
}
.gutter {
  width: 80px;
  flex: none;
  padding-right: 44px;
  border-right: 1px solid #2b2d30;
  color: #55575b;
  font: 16.580px/27px "DejaVu Sans Mono", monospace;
  text-align: right;
}
.source {
  padding-left: 3px;
  font: 16.580px/27px "DejaVu Sans Mono", monospace;
}
.k {
  color: #6f7276;
}
.v {
  color: #5b9565;
}
.inspect {
  position: absolute;
  top: 8px;
  right: 9px;
  display: flex;
  align-items: center;
  gap: 11px;
  color: #9da0a8;
}
.inspect-num {
  margin: 0 1px 0 -7px;
  color: #b5b7bc;
}
.database {
  position: relative;
  width: 288px;
  flex: none;
  overflow: hidden;
  background: #2b2d30;
  border-left: 1px solid #1e1f22;
}
.database .panel-head {
  border-bottom: 1px solid #393b40;
}
.db-title {
  letter-spacing: .8px;
}
.db-tools {
  height: 44px;
  display: flex;
  align-items: center;
  padding-left: 15px;
}
.t-db {
  margin-left: 11px;
}
.t-sep {
  width: 1px;
  height: 32px;
  margin: 0 9px 0 10px;
  background: #393b40;
}
.t-stop {
  margin-left: 10px;
}
.t-tbl {
  margin-left: 11px;
}
.t-more {
  margin-left: 44px;
}
.db-tree {
  padding-top: 7px;
}
.db-tree .tree-ico {
  margin: 0 7px 0 10px;
}
.d0 {
  padding-left: 16px;
}
.d1 {
  padding-left: 40px;
}
.d2 {
  padding-left: 64px;
}
.d3 {
  padding-left: 87px;
}
.count {
  margin-left: 12px;
  color: #6f7276;
}
.row.picked {
  margin-right: 16px;
  border-radius: 0 6px 6px 0;
  background: #3c3e43;
}

/* run tool window */
.run {
  flex: 1;
  display: flex;
  flex-direction: column;
  min-height: 0;
  background: #2b2d30;
}
.run-head {
  height: 50px;
  flex: none;
  display: flex;
  align-items: center;
  padding: 2px 0 0 15px;
  border-bottom: 1px solid #1e1f22;
}
.run-tab {
  position: relative;
  height: 50px;
  margin-left: 22px;
  padding: 5px 0 0 18px;
  display: flex;
  align-items: center;
  gap: 5px;
  width: 178px;
  color: #dfe1e5;
  border-bottom: 4px solid #5a5d63;
}
.run-tab .tab-close {
  margin-left: 11px;
}
.run-tools {
  height: 43px;
  flex: none;
  display: flex;
  align-items: center;
  padding-left: 13px;
}
.rt-stop {
  width: 15px;
  height: 18px;
  margin-left: 15px;
  border: 1px solid #c94f4f;
  border-radius: 2px;
  background: #8a3f3f;
}
.rt-sep {
  margin: 0 12px 0 12px;
}
.rt-exit {
  margin-left: 15px;
}
.rt-gauge {
  margin-left: 11px;
}
.rt-dots {
  margin: 0 0 0 19px;
}
.run-body {
  flex: 1;
  min-height: 0;
  display: flex;
  position: relative;
}
.run-side {
  width: 48px;
  flex: none;
  display: flex;
  flex-direction: column;
  align-items: center;
  padding-top: 14px;
  gap: 13px;
}
.rs-on {
  width: 27px;
  height: 27px;
  margin: -3px 0;
  border-radius: 5px;
  background: #43454a;
  display: flex;
  align-items: center;
  justify-content: center;
}
.console {
  flex: 1;
  min-width: 0;
  overflow: hidden;
  padding: 5px 0 0 14px;
  background: #1e1f22;
  font: 16.580px/27.500px "DejaVu Sans Mono", monospace;
  white-space: pre;
}
.log {
  color: #a8aaae;
}
.err {
  color: #c8444f;
}
.console-h {
  position: absolute;
  left: 63px;
  top: 230px;
  width: 396px;
  height: 10px;
  background: #45474a;
}
.console-v {
  position: absolute;
  right: 2px;
  top: 207px;
  width: 11px;
  height: 33px;
  background: #45474a;
}

/* status bar */
.status {
  height: 38px;
  flex: none;
  display: flex;
  align-items: center;
  padding: 0 0 3px 18px;
  background: #2b2d30;
  border-top: 1px solid #1e1f22;
  border-bottom: 1px solid #4a4a4a;
  color: #9da0a8;
  font-size: 16.250px;
}
.st-mod {
  width: 8px;
  height: 11px;
  margin-right: 7px;
  border: 1.500px solid #3f6fd0;
  border-radius: 2px;
}
.st-chev {
  margin: 0 8px;
}
.st-gear {
  margin-right: 6px;
}
.st-right {
  margin-left: auto;
  display: flex;
  align-items: center;
  gap: 21px;
  padding-right: 22px;
  font-size: 16px;
}
.st-idle {
  margin-right: -3px;
}
.dim {
  color: #5f6368;
}
.st-lock {
  margin-left: 3px;
}

/* taskbar */
.taskbar {
  flex: 1;
  display: flex;
  align-items: center;
  background: linear-gradient(90deg, #2b2416 0, #2d2415 20%, #221e18 50%, #1c1c1c 72%);
  color: #fff;
}
.weather {
  width: 475px;
  flex: none;
  display: flex;
  align-items: center;
  padding-left: 23px;
  gap: 7px;
}
.weather-text {
  display: flex;
  flex-direction: column;
  font: 14.200px/20px "Noto Sans", sans-serif;
  color: #f0ece4;
}
.search {
  width: 275px;
  height: 40px;
  margin-left: 17px;
  display: flex;
  align-items: center;
  padding-left: 13px;
  border: 1px solid #5f574a;
  border-radius: 20px;
  background: #4b4539;
  color: #e6e6e6;
  font: 16px "Noto Sans", sans-serif;
}
.search span {
  margin-left: 11px;
}
.search-deco {
  margin-left: auto;
  margin-right: 11px;
}
.apps {
  display: flex;
  margin-left: 2px;
}
.app {
  position: relative;
  width: 55px;
  height: 52px;
  display: flex;
  align-items: center;
  justify-content: center;
}
.app.dot::after {
  content: "";
  position: absolute;
  left: 24px;
  bottom: 0;
  width: 7px;
  height: 4px;
  border-radius: 2px;
  background: #9a9a9a;
}
.app.current {
  width: 51px;
  margin-left: 2px;
  border-radius: 6px;
  background: #2c2d2f;
}
.app.current svg {
  width: 30px;
  height: 40px;
}
.app.current::after {
  content: "";
  position: absolute;
  left: 16px;
  bottom: 1px;
  width: 20px;
  height: 4px;
  border-radius: 2px;
  background: #4fc3f7;
}
.chrome {
  position: relative;
  width: 30px;
  height: 30px;
  border-radius: 50%;
  background: conic-gradient(from -30deg, #ea4335 0 120deg, #fbbc04 120deg 240deg, #34a853 240deg 360deg);
}
.chrome::after {
  content: "";
  position: absolute;
  left: 8px;
  top: 8px;
  width: 14px;
  height: 14px;
  border: 2px solid #fff;
  border-radius: 50%;
  background: #4285f4;
}
.teams-t {
  font: bold 11px "Liberation Sans", sans-serif;
  fill: #fff;
  text-anchor: middle;
}
.ij-t {
  font: bold 9.500px "Liberation Sans", sans-serif;
  fill: #fff;
}
.tray {
  margin-left: auto;
  display: flex;
  align-items: center;
  gap: 6px;
  padding-right: 23px;
}
.tray-chev {
  margin: 0 14px 0 0;
}
.clock {
  width: 82px;
  display: flex;
  flex-direction: column;
  align-items: flex-end;
  font: 14.500px/21px "Noto Sans", sans-serif;
}
.tray-bell {
  margin-left: 1px;
}

/* the javafx window */
.dialog {
  position: absolute;
  left: 362px;
  top: 169px;
  width: 1281px;
  height: 688px;
  display: flex;
  flex-direction: column;
  border-radius: 8px;
  overflow: hidden;
  background: #afafaf;
  box-shadow: 0 0 0 1px rgba(150, 150, 150, .7), 0 6px 40px rgba(0, 0, 0, .45);
  font-family: "Noto Sans", sans-serif;
}
.dialog-title {
  height: 38px;
  flex: none;
  display: flex;
  align-items: center;
  padding-left: 9px;
  background: #eff2f9;
  color: #1a1a1a;
  font-size: 14.500px;
}
.dialog-title span {
  margin-left: 5px;
}
.dialog-ctrls {
  margin-left: auto;
  display: flex;
  gap: 46px;
  padding-right: 24px;
}
.dialog-body {
  flex: 1;
  min-height: 0;
  display: flex;
}
.sidebar {
  position: relative;
  width: 338px;
  flex: none;
  display: flex;
  flex-direction: column;
  align-items: flex-start;
  padding-top: 24px;
  background: #1a5879;
  box-shadow: inset 0 0 34px rgba(20, 30, 40, .75);
}
.brand {
  width: 100%;
  padding-left: 2px;
  color: #fff;
  font: 700 37.800px/53px "Open Sans", sans-serif;
  text-align: center;
}
.nav-btn {
  width: 284px;
  height: 46px;
  flex: none;
  border: 0;
  border-radius: 3px;
  background: #0c2461;
  color: #fff;
  font: 21.500px Lato, sans-serif;
}
.nb-dash {
  margin: 62px 0 0 54px;
}
.nb-student {
  margin: 18px 0 0 52px;
}
.nb-room {
  margin: 22px 0 0 52px;
}
.nb-res {
  margin: 23px 0 0 54px;
}
.nb-pend {
  margin: 17px 0 0 56px;
}
.nb-set {
  margin: 14px 0 0 26px;
}
.logout {
  width: 121px;
  height: 39px;
  margin: 22px 0 0 105px;
  border: 0;
  border-radius: 20px;
  background: #ff5252;
  box-shadow: 0 1px 6px rgba(0, 0, 0, .6);
  color: #333;
  font: 700 14px "Noto Sans", sans-serif;
}
.pending {
  flex: 1;
  min-width: 0;
  padding-left: 37px;
}
.pending h2 {
  height: 111px;
  padding: 20px 41px 0 0;
  color: #333;
  font: 700 25.500px/42px "Open Sans", sans-serif;
  text-align: center;
}
.table-wrap {
  width: 867px;
  height: 472px;
  overflow: hidden;
  background: #fff;
  border: 1px solid #d0d0d0;
  font-size: 14.200px;
  color: #333;
}
table {
  width: 100%;
  table-layout: fixed;
  border-collapse: collapse;
}
.c1 { width: 182px; }
.c2 { width: 212px; }
.c3 { width: 229px; }
.c4 { width: 244px; }
th {
  height: 29px;
  padding: 2px 0 0;
  border-right: 2px solid #f0f0f0;
  border-bottom: 2px solid #c6c6c6;
  background: linear-gradient(#ececec, #d9d9d9);
  font-weight: 700;
  text-align: center;
}
th:last-child {
  border-right: 0;
}
td {
  height: 29px;
  padding: 2px 0 0 4px;
  border-right: 1px solid #ececec;
  border-bottom: 1px solid #ececec;
}
tbody tr:nth-child(even) {
  background: #f9f9f9;
}
```
